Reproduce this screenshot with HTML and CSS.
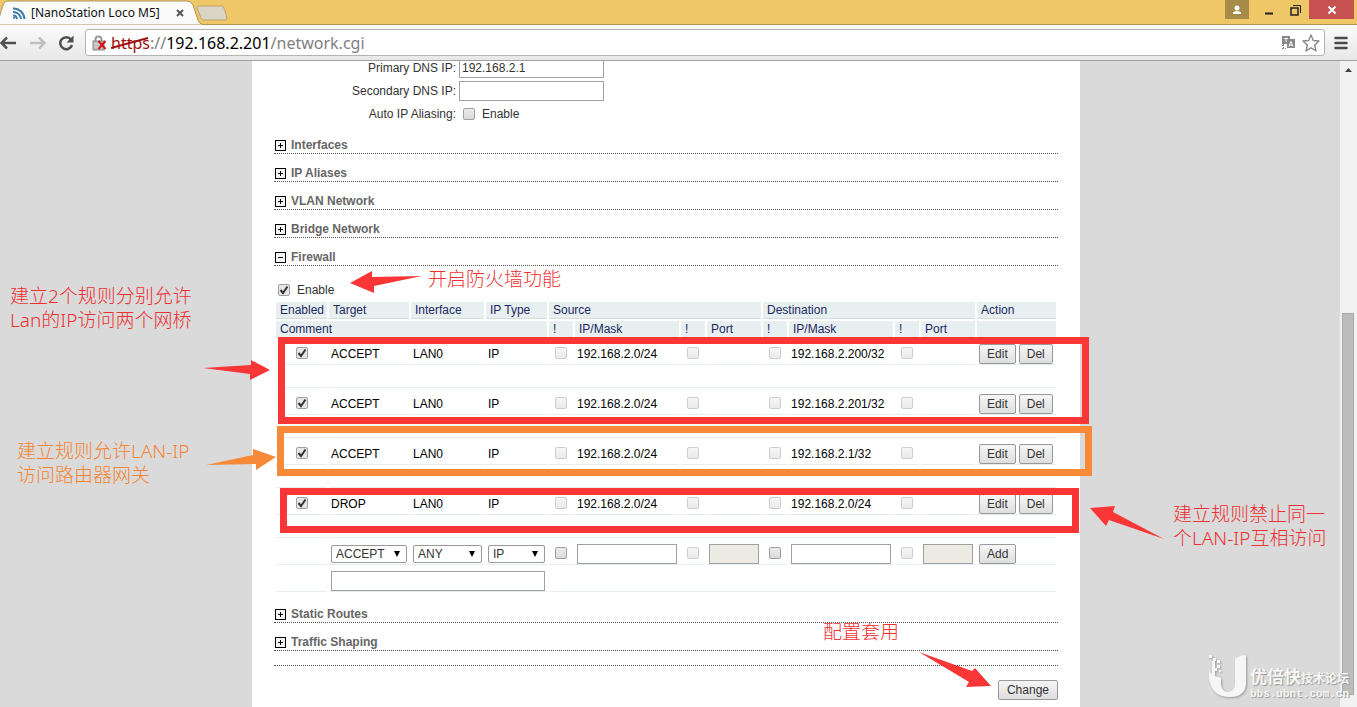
FILE: index.html
```html
<!DOCTYPE html>
<html lang="en">
<head>
    <meta charset="UTF-8">
    <meta name="viewport" content="width=device-width, initial-scale=1.0">
    <title>[NanoStation Loco M5]</title>
    <link rel="stylesheet" href="styles.css">
</head>
<body>
    <!-- Shared icons -->
    <svg class="sprite" aria-hidden="true">
        <symbol id="plus" viewBox="0 0 11 11">
            <rect x="0.5" y="0.5" width="10" height="10" fill="#f4f4f4" stroke="#000"/>
            <path d="M3 5.5h5M5.5 3v5" stroke="#000" fill="none"/>
        </symbol>
        <symbol id="minus" viewBox="0 0 11 11">
            <rect x="0.5" y="0.5" width="10" height="10" fill="#f4f4f4" stroke="#000"/>
            <path d="M3 5.5h5" stroke="#000" fill="none"/>
        </symbol>
    </svg>

    <!-- Tab strip -->
    <div class="tab-strip">
        <div class="tab">
            <svg class="tab-shape" viewBox="0 0 204 25" aria-hidden="true">
                <path d="M-6 25C0 24 1 5 5 2Q6 1 9 1H187Q191 1 193 5L198 20Q199 24 204 25Z" fill="#fafafa" stroke="#b1945a"/>
            </svg>
            <svg class="tab-icon" width="14" height="14" viewBox="0 0 14 14" fill="none" stroke="#3d7ea6" stroke-width="2" aria-hidden="true">
                <path d="M1 2.5C7 2 12 7 12.5 13"/>
                <path d="M1 6C5.500 6 8.500 9 9 13"/>
                <path d="M1 9.500Q4.500 9.500 5 13"/>
                <circle cx="2" cy="12" r="1" fill="#3d7ea6" stroke="none"/>
            </svg>
            <span class="tab-title">[NanoStation Loco M5]</span>
            <button class="tab-close" aria-label="Close tab">
                <svg width="8" height="8" viewBox="0 0 8 8"><path d="M1 1l6 6M7 1l-6 6" stroke="#555" stroke-width="2"/></svg>
            </button>
        </div>
        <button class="new-tab" aria-label="New tab">
            <svg width="32" height="16" viewBox="0 0 32 16"><path d="M3 1H25Q27 1 28 3L31 13Q31 15 29 15H8Q6 15 5 13L1 3Q1 1 3 1Z" fill="#d9d4c3" stroke="#bfa46a"/></svg>
        </button>
        <div class="window-buttons">
            <button class="profile" aria-label="Profile">
                <svg width="10" height="10" viewBox="0 0 10 10" fill="#fff"><circle cx="5" cy="3" r="2.500"/><path d="M1 9V7.500Q2 6 5 6T9 7.500V9Z"/></svg>
            </button>
            <button class="win-btn" aria-label="Minimize">
                <svg width="12" height="12" viewBox="0 0 12 12"><path d="M2 9.500h8" stroke="#222" stroke-width="2"/></svg>
            </button>
            <button class="win-btn" aria-label="Restore">
                <svg width="12" height="12" viewBox="0 0 12 12" fill="none" stroke="#222"><path d="M3 1.500H10.500V9"/><rect x="1" y="4" width="7" height="7" stroke-width="1.500"/></svg>
            </button>
            <button class="win-close" aria-label="Close window">
                <svg width="10" height="10" viewBox="0 0 10 10"><path d="M1.500 1.500l7 7M8.500 1.500l-7 7" stroke="#fff" stroke-width="2"/></svg>
            </button>
        </div>
    </div>

    <!-- Toolbar -->
    <div class="toolbar">
        <button class="tool-btn" aria-label="Back">
            <svg width="17" height="16" viewBox="0 0 17 16" fill="none" stroke="#505050" stroke-width="2.500"><path d="M1.500 8H16M7 2.500L1.500 8L7 13.500"/></svg>
        </button>
        <button class="tool-btn" aria-label="Forward">
            <svg width="17" height="16" viewBox="0 0 17 16" fill="none" stroke="#c0c0c0" stroke-width="2.500"><path d="M1 8H15M10 2.500L15.500 8L10 13.500"/></svg>
        </button>
        <button class="tool-btn" aria-label="Reload">
            <svg width="17" height="16" viewBox="0 0 17 16"><path d="M13 4.500A6 6 0 1 0 14 10" fill="none" stroke="#505050" stroke-width="2.500"/><path d="M15.500 0.500V7.500H8.500Z" fill="#505050"/></svg>
        </button>
        <div class="omnibox">
            <svg width="16" height="16" viewBox="0 0 16 16" aria-hidden="true">
                <path d="M3.500 7V4.500Q3.500 1.500 6.500 1.500T9.500 4.500V7" fill="none" stroke="#999" stroke-width="2"/>
                <rect x="1" y="6" width="11" height="9" fill="#bbb" stroke="#888"/>
                <path d="M2 9h9M2 12h9" stroke="#ddd"/>
                <path d="M6.500 6l7 8M13.500 6l-7 8" stroke="#d0131b" stroke-width="2"/>
            </svg>
            <div class="url" role="textbox" aria-label="Address"><span class="scheme">https<svg class="strike" viewBox="0 0 42 14" preserveAspectRatio="none" aria-hidden="true"><path d="M0 12L40 2" stroke="#a01010" stroke-width="2"/></svg></span><span class="dim">://</span>192.168.2.201<span class="dim">/network.cgi</span></div>
            <button class="tool-btn" aria-label="Translate">
                <svg width="16" height="16" viewBox="0 0 16 16"><path d="M1 1h8v3h5v9H6V9H1Z" fill="#888"/><path d="M3 3.500h4M5 3.500V7" stroke="#fff" fill="none"/><path d="M8 11.500L10 6.500L12 11.500M9 10h2" stroke="#fff" fill="none"/><path d="M1 10.500h3M2.500 9v5M1 13.500h4" stroke="#888" stroke-dasharray="2 1"/></svg>
            </button>
            <button class="tool-btn" aria-label="Bookmark">
                <svg width="18" height="18" viewBox="0 0 18 18"><path d="M9 1L11.300 6.500L17 7L12.700 11L14 17L9 13.800L4 17L5.300 11L1 7L6.700 6.500Z" fill="#fff" stroke="#888" stroke-width="1.400" stroke-linejoin="round"/></svg>
            </button>
        </div>
        <button class="tool-btn" aria-label="Menu">
            <svg width="14" height="14" viewBox="0 0 14 14"><path d="M1.500 2h11M1.500 7h11M1.500 12h11" stroke="#4a4a4a" stroke-width="2.500" stroke-linecap="round"/></svg>
        </button>
    </div>

    <!-- Page -->
    <div class="viewport">
        <div class="page">
            <main class="panel">
                <div class="form-row first">
                    <label for="dns1">Primary DNS IP:</label>
                    <input type="text" id="dns1" class="dns" value="192.168.2.1">
                </div>
                <div class="form-row">
                    <label for="dns2">Secondary DNS IP:</label>
                    <input type="text" id="dns2" class="dns">
                </div>
                <div class="form-row">
                    <span class="row-label">Auto IP Aliasing:</span>
                    <label class="check-label alias"><input type="checkbox"> Enable</label>
                </div>

                <div class="sections">
                    <h2><button class="section"><svg><use href="#plus"/></svg>Interfaces</button></h2>
                    <h2><button class="section"><svg><use href="#plus"/></svg>IP Aliases</button></h2>
                    <h2><button class="section"><svg><use href="#plus"/></svg>VLAN Network</button></h2>
                    <h2><button class="section"><svg><use href="#plus"/></svg>Bridge Network</button></h2>
                    <h2><button class="section"><svg><use href="#minus"/></svg>Firewall</button></h2>
                </div>

                <label class="check-label firewall-enable"><input type="checkbox" checked> Enable</label>

                <table class="rules">
                    <colgroup>
                        <col class="c-enabled"><col class="c-target"><col class="c-iface"><col class="c-type">
                        <col class="c-not"><col class="c-ip"><col class="c-not"><col class="c-port">
                        <col class="c-not"><col class="c-ip"><col class="c-not"><col class="c-port">
                        <col class="c-action">
                    </colgroup>
                    <thead>
                        <tr>
                            <th>Enabled</th>
                            <th>Target</th>
                            <th>Interface</th>
                            <th>IP Type</th>
                            <th colspan="4">Source</th>
                            <th colspan="4">Destination</th>
                            <th>Action</th>
                        </tr>
                        <tr>
                            <th colspan="4">Comment</th>
                            <th>!</th>
                            <th>IP/Mask</th>
                            <th>!</th>
                            <th>Port</th>
                            <th>!</th>
                            <th>IP/Mask</th>
                            <th>!</th>
                            <th>Port</th>
                            <th></th>
                        </tr>
                    </thead>
                    <tbody>
                        <tr>
                            <td class="mid"><input type="checkbox" aria-label="Rule enabled" checked></td>
                            <td>ACCEPT</td>
                            <td>LAN0</td>
                            <td>IP</td>
                            <td class="mid"><input type="checkbox" aria-label="Not source IP" disabled></td>
                            <td>192.168.2.0/24</td>
                            <td class="mid"><input type="checkbox" aria-label="Not source port" disabled></td>
                            <td></td>
                            <td class="mid"><input type="checkbox" aria-label="Not destination IP" disabled></td>
                            <td>192.168.2.200/32</td>
                            <td class="mid"><input type="checkbox" aria-label="Not destination port" disabled></td>
                            <td></td>
                            <td><div class="actions"><button class="btn">Edit</button><button class="btn">Del</button></div></td>
                        </tr>
                        <tr class="comment"><td></td><td colspan="12"></td></tr>
                        <tr>
                            <td class="mid"><input type="checkbox" aria-label="Rule enabled" checked></td>
                            <td>ACCEPT</td>
                            <td>LAN0</td>
                            <td>IP</td>
                            <td class="mid"><input type="checkbox" aria-label="Not source IP" disabled></td>
                            <td>192.168.2.0/24</td>
                            <td class="mid"><input type="checkbox" aria-label="Not source port" disabled></td>
                            <td></td>
                            <td class="mid"><input type="checkbox" aria-label="Not destination IP" disabled></td>
                            <td>192.168.2.201/32</td>
                            <td class="mid"><input type="checkbox" aria-label="Not destination port" disabled></td>
                            <td></td>
                            <td><div class="actions"><button class="btn">Edit</button><button class="btn">Del</button></div></td>
                        </tr>
                        <tr class="comment"><td></td><td colspan="12"></td></tr>
                        <tr>
                            <td class="mid"><input type="checkbox" aria-label="Rule enabled" checked></td>
                            <td>ACCEPT</td>
                            <td>LAN0</td>
                            <td>IP</td>
                            <td class="mid"><input type="checkbox" aria-label="Not source IP" disabled></td>
                            <td>192.168.2.0/24</td>
                            <td class="mid"><input type="checkbox" aria-label="Not source port" disabled></td>
                            <td></td>
                            <td class="mid"><input type="checkbox" aria-label="Not destination IP" disabled></td>
                            <td>192.168.2.1/32</td>
                            <td class="mid"><input type="checkbox" aria-label="Not destination port" disabled></td>
                            <td></td>
                            <td><div class="actions"><button class="btn">Edit</button><button class="btn">Del</button></div></td>
                        </tr>
                        <tr class="comment"><td></td><td colspan="12"></td></tr>
                        <tr>
                            <td class="mid"><input type="checkbox" aria-label="Rule enabled" checked></td>
                            <td>DROP</td>
                            <td>LAN0</td>
                            <td>IP</td>
                            <td class="mid"><input type="checkbox" aria-label="Not source IP" disabled></td>
                            <td>192.168.2.0/24</td>
                            <td class="mid"><input type="checkbox" aria-label="Not source port" disabled></td>
                            <td></td>
                            <td class="mid"><input type="checkbox" aria-label="Not destination IP" disabled></td>
                            <td>192.168.2.0/24</td>
                            <td class="mid"><input type="checkbox" aria-label="Not destination port" disabled></td>
                            <td></td>
                            <td><div class="actions"><button class="btn">Edit</button><button class="btn">Del</button></div></td>
                        </tr>
                        <tr class="comment"><td></td><td colspan="12"></td></tr>
                        <!-- New rule -->
                        <tr>
                            <td></td>
                            <td><select aria-label="Target"><option>ACCEPT</option><option>DROP</option></select></td>
                            <td><select aria-label="Interface"><option>ANY</option><option>LAN0</option></select></td>
                            <td><select aria-label="IP type"><option>IP</option><option>TCP</option></select></td>
                            <td class="mid"><input type="checkbox" aria-label="Not source IP"></td>
                            <td><input type="text" aria-label="Source IP/Mask"></td>
                            <td class="mid"><input type="checkbox" aria-label="Not source port" disabled></td>
                            <td><input type="text" aria-label="Source port" disabled></td>
                            <td class="mid"><input type="checkbox" aria-label="Not destination IP"></td>
                            <td><input type="text" aria-label="Destination IP/Mask"></td>
                            <td class="mid"><input type="checkbox" aria-label="Not destination port" disabled></td>
                            <td><input type="text" aria-label="Destination port" disabled></td>
                            <td><div class="actions"><button class="btn">Add</button></div></td>
                        </tr>
                        <tr>
                            <td></td>
                            <td colspan="3"><input type="text" aria-label="Comment"></td>
                            <td colspan="9"></td>
                        </tr>
                    </tbody>
                </table>

                <h2><button class="section"><svg><use href="#plus"/></svg>Static Routes</button></h2>
                <h2><button class="section"><svg><use href="#plus"/></svg>Traffic Shaping</button></h2>
                <div class="footer">
                    <button class="btn">Change</button>
                </div>

                <!-- Notes drawn over the page, measured from the panel's corner -->
                <svg class="marks" aria-hidden="true">
                    <g transform="translate(-252 -61)">
                        <g fill="none" stroke-width="7">
                            <rect x="281.500" y="340.500" width="804" height="80" stroke="#fa3636"/>
                            <rect x="280.500" y="429.500" width="808" height="43" stroke="#f68a38"/>
                            <rect x="283.500" y="491.500" width="792" height="38" stroke="#fa3636"/>
                        </g>
                        <g fill="#fa3636">
                            <path d="M350 283L372 271V277L422 276L374 286V293Z"/>
                            <path d="M203 368L251 365V360L270 370L250 380V374Z"/>
                            <path d="M1090 508L1115 506L1113 512L1164 539L1109 520L1106 526Z"/>
                            <path d="M919 652L972 671L975 668L991 686L966 687L969 682Z"/>
                        </g>
                        <path d="M206 465L253 455V449L276 457L256 470V464Z" fill="#f68a38"/>
                    </g>
                </svg>
                <p class="note note-enable" lang="zh">开启防火墙功能</p>
                <p class="note note-bridges" lang="zh">建立2个规则分别允许<br>Lan的IP访问两个网桥</p>
                <p class="note note-gateway" lang="zh">建立规则允许LAN-IP<br>访问路由器网关</p>
                <p class="note note-drop" lang="zh">建立规则禁止同一<br>个LAN-IP互相访问</p>
                <p class="note note-apply" lang="zh">配置套用</p>
            </main>
        </div>
        <div class="scrollbar">
            <svg width="7" height="4" viewBox="0 0 7 4" aria-hidden="true"><path d="M0 4L3.500 0L7 4Z" fill="#444"/></svg>
            <div class="thumb"></div>
        </div>
    </div>

    <!-- Forum watermark -->
    <div class="watermark" lang="zh">
        <svg width="42" height="46" viewBox="0 0 42 46" fill="#f6f6f6" aria-hidden="true">
            <path d="M27 5Q32 1 38 1V30Q37 43 22 43Q4 43 1 25V17L4 20V7H7V22L13 24V31Q14 38 20 38Q27 37 27 30Z"/>
            <path d="M1 1h3v3H1zM5 4h3v3H5zM9 6h3v3H9zM9 11h3v3H9zM6 14h3v3H6zM11 16h2v2h-2z"/>
        </svg>
        <div class="watermark-text">
            <div class="brand"><strong>优倍快</strong><span>技术论坛</span></div>
            <div class="site">bbs.ubnt.com.cn</div>
        </div>
    </div>
</body>
</html>
```
FILE: styles.css
```css
* {
    box-sizing: border-box;
}

body {
    margin: 0;
    height: 100vh;
    display: flex;
    flex-direction: column;
    overflow: hidden;
    position: relative;
    font-family: "Liberation Sans", Arial, sans-serif;
    font-size: 12px;
    line-height: 14px;
    color: #333;
    background-color: #dadada;
}

button {
    margin: 0;
    padding: 0;
    border: none;
    background: none;
    font: inherit;
    color: inherit;
}

svg {
    display: block;
    flex: none;
}

.sprite {
    position: absolute;
    width: 0;
    height: 0;
}

/* Tab strip */
.tab-strip {
    height: 25px;
    flex: none;
    display: flex;
    background-color: #efc767;
    border-bottom: 1px solid #b1945a;
}

.tab {
    position: relative;
    width: 196px;
    height: 25px;
    padding: 0 12px;
    display: flex;
    align-items: center;
    gap: 5px;
}

.tab-shape {
    position: absolute;
    left: 0;
    top: 0;
    width: 204px;
    height: 25px;
}

.tab-icon, .tab-title, .tab-close {
    position: relative;
}

.tab-title {
    flex: 1;
    font-family: "Noto Sans", "Open Sans", sans-serif;
    color: #111;
    white-space: nowrap;
}

.new-tab {
    padding-top: 5px;
    align-self: flex-start;
}

.window-buttons {
    margin-left: auto;
    padding-right: 3px;
    display: flex;
    align-items: flex-start;
}

.window-buttons button {
    height: 19px;
    display: flex;
    align-items: center;
    justify-content: center;
}

.profile {
    width: 24px;
    margin-right: 6px;
    background-color: #a68c48;
}

.win-btn {
    width: 27px;
}

.win-close {
    width: 45px;
    background-color: #c75050;
}

/* Toolbar */
.toolbar {
    height: 36px;
    flex: none;
    display: flex;
    align-items: center;
    gap: 12px;
    padding-right: 9px;
    background: linear-gradient(#fafafa, #e8e8e8);
    border-bottom: 1px solid #a0a0a0;
}

.toolbar .omnibox {
    flex: 1;
    height: 27px;
    margin: 0 -3px 0 -2px;
    padding: 0 4px 0 6px;
    display: flex;
    align-items: center;
    gap: 5px;
    background-color: #fff;
    border: 1px solid #b4b4b4;
    border-radius: 3px;
}

.url {
    flex: 1;
    margin-left: -2px;
    font-family: "Noto Sans", "Open Sans", sans-serif;
    font-size: 16px;
    line-height: 24px;
    color: #000;
}

.scheme {
    position: relative;
    color: #a01010;
}

.strike {
    position: absolute;
    left: 0;
    top: 4px;
    width: 100%;
    height: 14px;
}

.dim {
    color: #808080;
}

/* Page */
.viewport {
    flex: 1;
    min-height: 0;
    display: flex;
}

.page {
    flex: 1;
    min-width: 0;
    padding-right: 8px;
    overflow: hidden;
}

.panel {
    display: flow-root;
    position: relative;
    max-width: 828px;
    min-height: 100%;
    margin: 0 auto;
    padding: 0 22px;
    background-color: #fff;
}

.scrollbar {
    width: 17px;
    padding: 7px 3px 12px 2px;
    display: flex;
    flex-direction: column;
    align-items: center;
    justify-content: space-between;
    background-color: #f1f1f1;
}

.thumb {
    width: 100%;
    height: 61%;
    background-color: #bcbcbc;
    border: 1px solid #a8a8a8;
}

/* Form */
.form-row {
    display: grid;
    grid-template-columns: 182px 1fr;
    gap: 3px;
    align-items: center;
    height: 23px;
    text-align: right;
}

.form-row.first {
    margin-top: -5px;
}

input[type="text"] {
    display: block;
    width: 100%;
    height: 20px;
    padding: 0 2px;
    border: 1px solid #a0a0a0;
    background-color: #fff;
    font: inherit;
    color: #333;
}

input[type="text"]:disabled {
    background-color: #ebebe4;
}

input.dns {
    width: 145px;
}

input[type="checkbox"] {
    appearance: none;
    flex: none;
    display: inline-block;
    width: 12px;
    height: 12px;
    margin: 0;
    border: 1px solid #a0a0a0;
    border-radius: 2px;
    background: linear-gradient(#ececec, #dadada);
    vertical-align: middle;
}

input[type="checkbox"]:disabled {
    border-color: #cdcdcd;
    background: linear-gradient(#f6f6f6, #eaeaea);
}

input[type="checkbox"]:checked {
    background: #e6e6e6 url("data:image/svg+xml,%3Csvg xmlns='http://www.w3.org/2000/svg' viewBox='0 0 10 10'%3E%3Cpath d='M1.5 5l2.500 3L8.500 1.500' fill='none' stroke='%23333' stroke-width='2'/%3E%3C/svg%3E") center / 10px 10px no-repeat;
}

.check-label {
    display: flex;
    align-items: center;
    gap: 7px;
}

.alias {
    padding-left: 4px;
}

/* Section headings */
.sections {
    padding-top: 1px;
}

h2 {
    margin: 0;
    font-size: 12px;
    line-height: 14px;
    border-bottom: 1px dotted #555;
}

.section {
    width: 100%;
    height: 27px;
    padding: 0 0 1px 1px;
    display: flex;
    align-items: flex-end;
    gap: 5px;
    font-weight: bold;
    color: #666;
}

.section svg {
    width: 11px;
    height: 11px;
    margin-bottom: 1px;
}

.firewall-enable {
    padding: 17px 0 3px 4px;
}

/* Firewall rules */
.rules {
    width: 100%;
    margin-bottom: 1px;
    table-layout: fixed;
    border-collapse: separate;
    border-spacing: 2px;
}

.c-enabled { width: 51px; }
.c-target { width: 80px; }
.c-iface { width: 73px; }
.c-type { width: 61px; }
.c-not { width: 24px; }
.c-ip { width: 104px; }
.c-port { width: 54px; }
.c-action { width: 79px; }

.rules th {
    height: 17px;
    padding: 0 0 0 4px;
    text-align: left;
    font-weight: normal;
    color: #1c2860;
    background-color: #e7eff1;
    border-bottom: 1px solid #d2dde0;
    white-space: nowrap;
}

.rules td {
    height: 25px;
    padding: 4px 2px 0;
    color: #000;
    border-bottom: 1px solid #e6edf0;
    white-space: nowrap;
}

.rules .comment td {
    height: 21px;
    padding: 0;
}

.rules td.mid {
    padding-bottom: 2px;
    text-align: center;
    line-height: 12px;
}

.rules select {
    appearance: none;
    display: block;
    width: 100%;
    height: 18px;
    padding: 0 4px;
    border: 1px solid #999;
    border-radius: 2px;
    background: #fff url("data:image/svg+xml,%3Csvg xmlns='http://www.w3.org/2000/svg' viewBox='0 0 6 6'%3E%3Cpath d='M0 0h6L3 6z'/%3E%3C/svg%3E") right 6px center / 6px 6px no-repeat;
    font: inherit;
    color: #333;
}

.actions {
    display: flex;
    gap: 3px;
}

.btn {
    height: 20px;
    padding: 0 7px;
    border: 1px solid #999;
    border-radius: 2px;
    background: linear-gradient(#f6f6f6, #dedede);
    color: #333;
}

.footer {
    display: flex;
    justify-content: flex-end;
    margin-top: 14px;
    padding-top: 14px;
    border-top: 1px dotted #555;
}

.footer .btn {
    padding: 0 8px;
}

/* Notes */
.marks {
    position: absolute;
    left: 0;
    top: 0;
    overflow: visible;
    pointer-events: none;
}

.note {
    position: absolute;
    margin: 0;
    font-family: "Noto Sans", "Noto Sans CJK SC", sans-serif;
    font-size: 19px;
    font-weight: 300;
    line-height: 24px;
    color: #ee3030;
    white-space: nowrap;
}

.note-enable {
    left: 176px;
    top: 206px;
}

.note-bridges {
    left: -242px;
    top: 223px;
}

.note-gateway {
    left: -235px;
    top: 378px;
    color: #f68430;
}

.note-drop {
    left: 921px;
    top: 441px;
}

.note-apply {
    left: 571px;
    top: 559px;
}

/* Watermark */
.watermark {
    position: absolute;
    right: 8px;
    bottom: 7px;
    display: flex;
    align-items: flex-end;
    color: #f6f6f6;
    font-family: "Noto Sans CJK SC", sans-serif;
    text-shadow: 1px 1px 1px #999;
    pointer-events: none;
}

.watermark svg {
    filter: drop-shadow(1px 1px 1px #999);
}

.brand {
    display: flex;
    align-items: baseline;
    line-height: 20px;
}

.brand strong {
    font-size: 17px;
}

.brand span {
    font-size: 12px;
    font-weight: bold;
}

.site {
    font-family: "Liberation Mono", monospace;
    font-size: 11px;
    font-weight: bold;
    line-height: 12px;
}
```
